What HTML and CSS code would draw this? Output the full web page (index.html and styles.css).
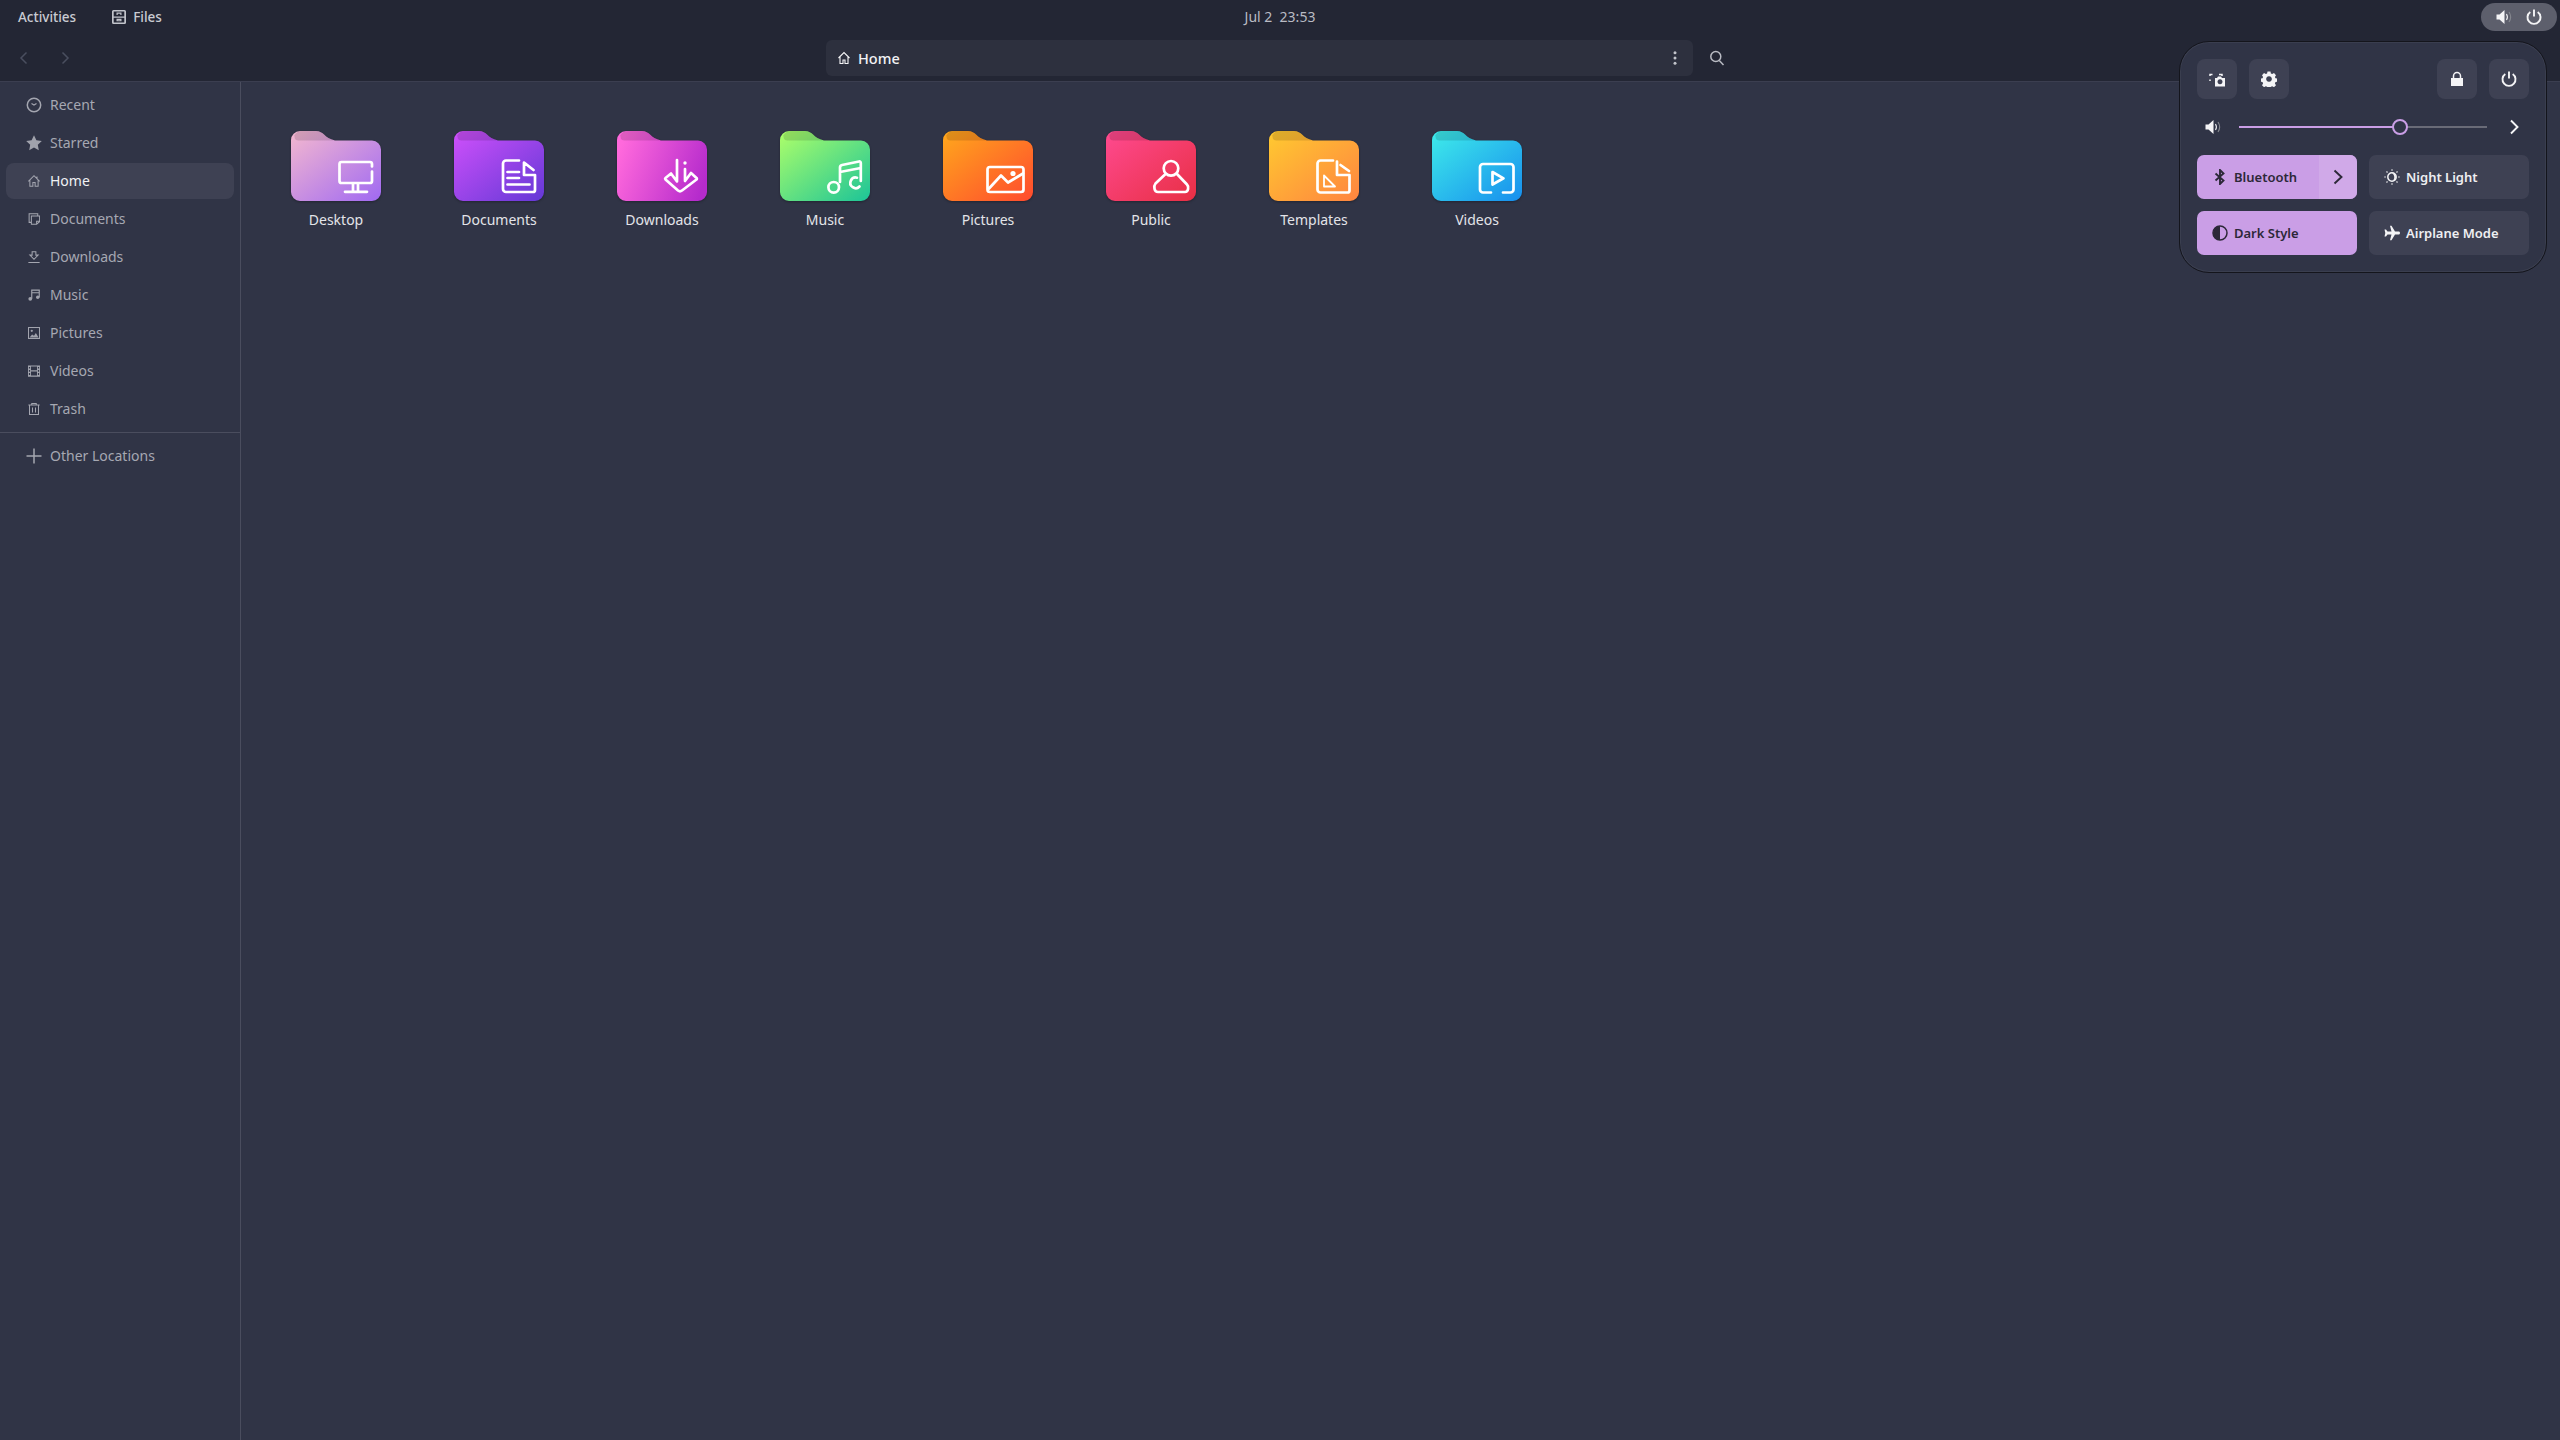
FILE: index.html
```html
<!DOCTYPE html>
<html lang="en">
<head>
<meta charset="utf-8">
<title>Files</title>
<link rel="stylesheet" href="styles.css">
</head>
<body>
<svg class="defs" width="0" height="0" aria-hidden="true">
  <defs>
    <linearGradient id="g-desktop" x1="0" y1="0" x2="1" y2="1"><stop offset="0" stop-color="#f4b8cf"/><stop offset="1" stop-color="#a069f2"/></linearGradient>
    <linearGradient id="g-documents" x1="0" y1="0" x2="1" y2="1"><stop offset="0" stop-color="#cf50fb"/><stop offset="1" stop-color="#6439d6"/></linearGradient>
    <linearGradient id="g-downloads" x1="0" y1=".35" x2="1" y2=".65"><stop offset="0" stop-color="#ff69dc"/><stop offset="1" stop-color="#b52bcc"/></linearGradient>
    <linearGradient id="g-music" x1="0" y1="0" x2="1" y2="1"><stop offset="0" stop-color="#aeff69"/><stop offset="1" stop-color="#1cc498"/></linearGradient>
    <linearGradient id="g-pictures" x1="0" y1="0" x2="1" y2="1"><stop offset="0" stop-color="#ffa81c"/><stop offset="1" stop-color="#ff4a2e"/></linearGradient>
    <linearGradient id="g-public" x1="0" y1="0" x2="1" y2="1"><stop offset="0" stop-color="#ff4a90"/><stop offset="1" stop-color="#e82f44"/></linearGradient>
    <linearGradient id="g-templates" x1="0" y1="0" x2="1" y2="1"><stop offset="0" stop-color="#ffca30"/><stop offset="1" stop-color="#ff8440"/></linearGradient>
    <linearGradient id="g-videos" x1="0" y1="0" x2="1" y2="1"><stop offset="0" stop-color="#3eecea"/><stop offset="1" stop-color="#178eee"/></linearGradient>
    <path id="folder-body" d="M9 0H25C33 0 33 7 44 9.500H81a9 9 0 0 1 9 9V61a9 9 0 0 1-9 9H9a9 9 0 0 1-9-9V9a9 9 0 0 1 9-9z"/>
    <path id="folder-tab" d="M9 0H25C33 0 33 7 44 9.500H7.500A4 4 0 0 1 3.500 5.500C3.500 5 3.200 5 3 5A9 9 0 0 1 9 0z"/>
  </defs>
</svg>

<div class="desktop">
  <header class="chrome">
    <div class="shellbar">
      <div class="shell-left">
        <span class="shell-text shell-activities">Activities</span>
        <span class="app-menu">
          <svg class="i16" viewBox="0 0 16 16"><path class="fill-light" fill-rule="evenodd" d="M2.500 1h11A1.500 1.500 0 0 1 15 2.500v11a1.500 1.500 0 0 1-1.500 1.500h-11A1.500 1.500 0 0 1 1 13.500v-11A1.500 1.500 0 0 1 2.500 1zm.2 1.500v5h10.600v-5zm0 6.200v4.800h10.600V8.700zM5.500 3.600h5V6h-1.200V4.800H6.700V6H5.500zm0 6.200h5v2.400h-5zm1.200 1.100v.4h2.600v-.4z"/></svg>
          <span class="shell-text">Files</span>
        </span>
      </div>
      <div class="shell-clock">Jul 2&nbsp;&nbsp;23:53</div>
      <div class="shell-right"></div>
    </div>
    <div class="headerbar">
      <div class="nav-buttons">
        <svg class="i16" viewBox="0 0 16 16"><path class="stroke-off" d="M10.500 2.500 5 8l5.500 5.500"/></svg>
        <svg class="i16" viewBox="0 0 16 16"><path class="stroke-off" d="M5.500 2.500 11 8l-5.500 5.500"/></svg>
      </div>
      <div class="pathbar">
        <div class="crumb">
          <svg class="i14" viewBox="0 0 14 14"><path class="stroke-white thin" d="M1.500 7 7 1.500 12.500 7M3 6v6.500h3V9h2v3.500h3V6"/></svg>
          <span>Home</span>
        </div>
        <svg class="i16" viewBox="0 0 16 16"><circle class="fill-light" cx="8" cy="2.800" r="1.500"/><circle class="fill-light" cx="8" cy="8" r="1.500"/><circle class="fill-light" cx="8" cy="13.200" r="1.500"/></svg>
      </div>
      <svg class="i16 search" viewBox="0 0 16 16"><circle class="stroke-light" cx="6.800" cy="6.500" r="5"/><path class="stroke-light" d="m10.300 10.500 4.200 4.500"/></svg>
    </div>
  </header>

  <main class="main">
    <nav class="sidebar">
      <ul class="places">
        <li class="place"><svg class="i16" viewBox="0 0 16 16"><circle class="stroke-dim" cx="8" cy="8" r="6.700"/><path class="stroke-dim thin" d="M5.500 6.500 8 8l2.500-1.500"/></svg><span>Recent</span></li>
        <li class="place"><svg class="i16 star" viewBox="0 0 16 16"><path class="fill-dim" d="m8 .3 2.400 5 5.400.7-4 3.800 1 5.400L8 12.600l-4.800 2.600 1-5.400-4-3.800 5.400-.7z"/></svg><span>Starred</span></li>
        <li class="place selected"><svg class="i12" viewBox="0 0 16 16"><path class="stroke-dim thin" d="M.5 8.500 8 1l7.500 7.500M2.500 7v8h4v-5h3v5h4V7M12 4.500V2"/></svg><span>Home</span></li>
        <li class="place"><svg class="i12" viewBox="0 0 16 16"><path class="stroke-dim thin" d="M4 12.500H1.500V1H13v2.500M4.500 4h11v7.500L11.500 15h-7zM15.500 11h-4v4"/></svg><span>Documents</span></li>
        <li class="place"><svg class="i12" viewBox="0 0 16 16"><path class="stroke-dim thin" d="M5.500 1h5v4.500h3L8 11 2.500 5.500h3zM.5 15.200h15"/></svg><span>Downloads</span></li>
        <li class="place"><svg class="i12" viewBox="0 0 16 16"><path class="stroke-dim" d="M5 13V1.500h10V11M5 5h10"/><circle class="fill-dim" cx="3" cy="13" r="2.500"/><circle class="fill-dim" cx="13" cy="11" r="2.300"/></svg><span>Music</span></li>
        <li class="place"><svg class="i12" viewBox="0 0 16 16"><rect class="stroke-dim thin" x=".7" y=".7" width="14.600" height="14.600"/><circle class="fill-dim" cx="5" cy="5" r="1.500"/><path class="fill-dim" d="m2 14 3.500-4 2.500 1.500L10.500 8l3.500 6z"/></svg><span>Pictures</span></li>
        <li class="place"><svg class="i12" viewBox="0 0 16 16"><path class="fill-dim" fill-rule="evenodd" d="M0 .5h16v15H0zm4 1.500v5h8V2zm0 6.500V14h8V8.500zM1.200 2.500v2.200h1.600V2.500zm0 4v2.500h1.600V6.500zm0 4.300v2.500h1.600v-2.500zm12-8.300v2.200h1.600V2.500zm0 4v2.500h1.600V6.500zm0 4.300v2.500h1.600v-2.500z"/></svg><span>Videos</span></li>
        <li class="place"><svg class="i12" viewBox="0 0 16 16"><path class="stroke-dim thin" d="M.5 2.800h15M5 2.800V.7h6v2.100M2 2.800v12.500h12V2.800M6 6v6.500M10 6v6.500"/></svg><span>Trash</span></li>
      </ul>
      <div class="side-sep"></div>
      <div class="place other"><svg class="i16" viewBox="0 0 16 16"><path class="stroke-dim" d="M8 .5v15M.5 8h15"/></svg><span>Other Locations</span></div>
    </nav>

    <section class="files">
      <figure class="folder">
        <svg class="folder-icon" viewBox="0 0 90 70"><use href="#folder-body" fill="url(#g-desktop)"/><use class="tab" href="#folder-tab"/><path class="glyph" d="M81 35.500V33a2 2 0 0 0-2-2H50.500a2 2 0 0 0-2 2v17a2 2 0 0 0 2 2H79a2 2 0 0 0 2-2v-9.500M62 52v8.500M67 52v8.500M54 60.800h22"/></svg>
        <figcaption>Desktop</figcaption>
      </figure>
      <figure class="folder">
        <svg class="folder-icon" viewBox="0 0 90 70"><use href="#folder-body" fill="url(#g-documents)"/><use class="tab" href="#folder-tab"/><path class="glyph" d="M65 29.500H52a3 3 0 0 0-3 3v25.500a3 3 0 0 0 3 3h27a2 2 0 0 0 2-2V44H70V31.500L79.500 39M53.500 41H65M53.500 47H65M53.500 53.500H75.500"/></svg>
        <figcaption>Documents</figcaption>
      </figure>
      <figure class="folder">
        <svg class="folder-icon" viewBox="0 0 90 70"><use href="#folder-body" fill="url(#g-downloads)"/><use class="tab" href="#folder-tab"/><path class="glyph" d="M60 29v21.500L54 42.500 48.500 47c-.5.500-.5 1 0 1.500L61 59.500c1.500 1.200 2.500 1.200 4 0L79.500 48.500c.5-.5.5-1 0-1.500L74 42l-6 8V38"/><circle class="dot" cx="68" cy="32" r="1.700"/></svg>
        <figcaption>Downloads</figcaption>
      </figure>
      <figure class="folder">
        <svg class="folder-icon" viewBox="0 0 90 70"><use href="#folder-body" fill="url(#g-music)"/><use class="tab" href="#folder-tab"/><path class="glyph" d="M60 51V36.500a2.500 2.500 0 0 1 2-2.500l17-3.500a1.500 1.500 0 0 1 1.800 1.500V50M60 41l20.800-4"/><circle class="glyph" cx="53.700" cy="56.300" r="5.300"/><path class="glyph" d="M79.500 55.500a5.300 5.300 0 1 1-2.500-8.800"/></svg>
        <figcaption>Music</figcaption>
      </figure>
      <figure class="folder">
        <svg class="folder-icon" viewBox="0 0 90 70"><use href="#folder-body" fill="url(#g-pictures)"/><use class="tab" href="#folder-tab"/><rect class="glyph" x="44.500" y="36" width="36" height="25" rx="2.500"/><path class="glyph" d="m46 57.500 12-13 7 7 15-9"/><circle class="dot" cx="70" cy="42.500" r="2.600"/></svg>
        <figcaption>Pictures</figcaption>
      </figure>
      <figure class="folder">
        <svg class="folder-icon" viewBox="0 0 90 70"><use href="#folder-body" fill="url(#g-public)"/><use class="tab" href="#folder-tab"/><circle class="glyph" cx="65" cy="37.300" r="7.300"/><path class="glyph" d="M59 43.500 49.500 52.500c-2 2.500-1.500 8.500 2.500 8.500h27c3.500 0 4-5.500 2-7.500L71 43"/></svg>
        <figcaption>Public</figcaption>
      </figure>
      <figure class="folder">
        <svg class="folder-icon" viewBox="0 0 90 70"><use href="#folder-body" fill="url(#g-templates)"/><use class="tab" href="#folder-tab"/><path class="glyph" d="M64 29.500H51.500a3 3 0 0 0-3 3v26a3 3 0 0 0 3 3h27a2 2 0 0 0 2-2V44H68V30.500M71.500 34 80 40"/><path class="glyph thin-glyph" d="M55 44.500v11h11z"/></svg>
        <figcaption>Templates</figcaption>
      </figure>
      <figure class="folder">
        <svg class="folder-icon" viewBox="0 0 90 70"><use href="#folder-body" fill="url(#g-videos)"/><use class="tab" href="#folder-tab"/><path class="glyph" d="M59 61.500h-8a3 3 0 0 1-3-3V36a3 3 0 0 1 3-3h27.500a3 3 0 0 1 3 3v22.500a3 3 0 0 1-3 3H71"/><path class="glyph" d="M60.500 41 71.500 47.300 60.500 53.500z"/></svg>
        <figcaption>Videos</figcaption>
      </figure>
    </section>
  </main>
</div>

<div class="status-pill">
  <svg class="i16" viewBox="0 0 16 16"><path class="fill-white" d="M.5 5.500h3L8.500 1v14l-5-4.500h-3z"/><path class="stroke-white thin" d="M10.500 5c1.200 2 1.200 4 0 6"/><path class="stroke-grey thin" d="M13 3c2 3 2 7 0 10"/></svg>
  <svg class="i16" viewBox="0 0 16 16"><path class="stroke-white thick" d="M8 .5v7M4.300 3a6.500 6.500 0 1 0 7.400 0"/></svg>
</div>

<aside class="quick">
  <div class="quick-row top-row">
    <div class="quick-group">
      <div class="round-btn"><svg class="i16" viewBox="0 0 16 16"><path class="stroke-white" d="M1 5V3.500h2.500M1 8.500v1.500M10 3.500h3V5"/><path class="fill-white" fill-rule="evenodd" d="M6 7h2l1-1.500h3L13 7h3v8.500H6zM11 8.300a2.500 2.500 0 1 0 .01 0z"/></svg></div>
      <div class="round-btn"><svg class="i16" viewBox="0 0 16 16"><path class="fill-white" fill-rule="evenodd" d="M6.500.5h3l.4 2 1.300.6 1.800-1 2 2.100-1.100 1.700.6 1.400 2 .4v3l-2 .4-.6 1.400 1.100 1.700-2 2-1.800-1-1.300.6-.4 2h-3l-.4-2-1.300-.6-1.800 1-2-2 1.100-1.700-.6-1.400-2-.4v-3l2-.4.6-1.400-1.100-1.700 2-2.100 1.800 1 1.300-.6zM8 5.200a2.800 2.800 0 1 0 .01 0z"/></svg></div>
    </div>
    <div class="quick-group">
      <div class="round-btn"><svg class="i16" viewBox="0 0 16 16"><path class="fill-white" d="M2 7h12v8H2z"/><path class="stroke-white" d="M4.500 7.500V5a3.500 3.500 0 0 1 7 0v2.500"/></svg></div>
      <div class="round-btn"><svg class="i16" viewBox="0 0 16 16"><path class="stroke-white thick" d="M8 .5v7M4.300 3a6.500 6.500 0 1 0 7.400 0"/></svg></div>
    </div>
  </div>
  <div class="slider-row">
    <svg class="i16" viewBox="0 0 16 16"><path class="fill-white" d="M.5 5.500h3L8.500 1v14l-5-4.500h-3z"/><path class="stroke-white thin" d="M10.500 5c1.200 2 1.200 4 0 6"/><path class="stroke-grey thin" d="M13 3c2 3 2 7 0 10"/></svg>
    <div class="slider"><div class="slider-fill"></div><div class="slider-knob"></div></div>
    <svg class="i16 slider-next" viewBox="0 0 16 16"><path class="stroke-white thick" d="m5 1.500 6.500 6.500L5 14.500"/></svg>
  </div>
  <div class="toggles">
    <div class="toggle on split">
      <div class="toggle-main">
        <svg class="i16" viewBox="0 0 16 16"><path class="stroke-dark thick" d="m3.500 4.500 8 7L8 15V1l3.500 3.500-8 7"/></svg>
        <span>Bluetooth</span>
      </div>
      <div class="toggle-arrow"><svg class="i16" viewBox="0 0 16 16"><path class="stroke-dark thick" d="m4.500 1.500 7 6.500-7 6.500"/></svg></div>
    </div>
    <div class="toggle">
      <svg class="i16" viewBox="0 0 16 16"><circle class="stroke-white" cx="8" cy="8" r="4.200"/><path class="fill-white" d="M8 4a4 4 0 0 1 0 8c3-1 3-6 0-8z"/><path class="stroke-white thin" d="M8 .3v1.500M8 14.200v1.500M.3 8h1.500M14.200 8h1.500M2.500 2.500l1 1M12.500 12.500l1 1M2.500 13.500l1-1M12.500 3.500l1-1"/></svg>
      <span>Night Light</span>
    </div>
    <div class="toggle on">
      <svg class="i16" viewBox="0 0 16 16"><circle class="stroke-dark" cx="8" cy="8" r="7"/><path class="fill-dark" d="M8 1a7 7 0 0 0 0 14z"/></svg>
      <span>Dark Style</span>
    </div>
    <div class="toggle">
      <svg class="i16" viewBox="0 0 16 16"><path class="fill-white" d="M6 .8h1.500L11 6.500h3.500c1 0 1.500.7 1.500 1.500s-.5 1.500-1.500 1.500H11L7.500 15.200H6l1.500-5.700H3.500L2 11.500H.5L1.300 8 .5 4.500H2l1.500 2h4z"/></svg>
      <span>Airplane Mode</span>
    </div>
  </div>
</aside>
</body>
</html>
```

FILE: styles.css
```css
* { box-sizing: border-box; }
html, body { margin: 0; height: 100%; }
body {
  background: #303446;
  color: #d8dae2;
  font-family: "Noto Sans", "Liberation Sans", sans-serif;
  font-size: 14px;
  overflow: hidden;
}
.defs { position: absolute; }
svg { display: block; flex: none; }
.i16 { width: 16px; height: 16px; }
.i14 { width: 14px; height: 14px; }
.i12 { width: 12px; height: 12px; margin: 0 2px; }

.stroke-off, .stroke-white, .stroke-light, .stroke-dim, .stroke-grey, .stroke-dark { fill: none; stroke-width: 1.5; }
.thin { stroke-width: 1.1; }
.thick { stroke-width: 1.9; }
.i12 .thin { stroke-width: 1.35; }
.stroke-off { stroke: #4a4e5f; }
.stroke-white { stroke: #f4f4f6; }
.stroke-light { stroke: #b9bbc3; }
.stroke-dim { stroke: #a4a6b0; }
.stroke-grey { stroke: #85878f; }
.stroke-dark { stroke: #2c2838; }
.fill-white { fill: #f4f4f6; }
.fill-light { fill: #c2c4cb; }
.fill-dim { fill: #a0a2ac; }
.fill-dark { fill: #2c2838; }

.desktop { display: flex; flex-direction: column; height: 1440px; }
.chrome { background: #232634; border-bottom: 1px solid #3b3e50; height: 82px; flex: none; }
.shellbar { height: 34px; display: grid; grid-template-columns: 1fr auto 1fr; align-items: center; padding: 0 18px; }
.shell-left { display: flex; align-items: center; gap: 35px; }
.shell-text { font-size: 13.5px; font-weight: 500; color: #c9cbd2; }
.app-menu { display: flex; align-items: center; gap: 6px; }
.shell-clock { font-size: 14px; color: #b9bbc3; margin-top: -1px; }

.headerbar { height: 47px; display: flex; align-items: center; padding-left: 16px; }
.nav-buttons { display: flex; gap: 25px; width: 810px; }
.pathbar { width: 867px; height: 36px; background: #2d303e; border-radius: 6px; display: flex; align-items: center; justify-content: space-between; padding: 0 10px 0 11px; }
.crumb { display: flex; align-items: center; gap: 7px; font-size: 14.5px; font-weight: 500; color: #f2f2f4; }
.search { margin-left: 16px; }

.main { flex: 1; display: flex; min-height: 0; }
.sidebar { width: 241px; flex: none; border-right: 1px solid #4a4d5e; padding-top: 5px; }
.places { list-style: none; margin: 0; padding: 0 6px; display: flex; flex-direction: column; gap: 2px; }
.place { height: 36px; display: flex; align-items: center; gap: 8px; padding-left: 20px; font-size: 14px; color: #a6a8b2; border-radius: 8px; }
.place span { margin-top: -1px; }
.place.selected { background: #3e4153; color: #f0f1f4; }
.side-sep { height: 1px; background: #4a4d5e; margin-top: 5px; }
.other { margin: 5px 6px 0; }

.files { flex: 1; display: flex; align-items: flex-start; padding: 49px 0 0 13.5px; }
.folder { width: 163px; margin: 0; display: flex; flex-direction: column; align-items: center; }
.folder-icon { width: 90px; height: 70px; filter: drop-shadow(0 1px 1px rgba(0,0,0,.3)); overflow: visible; }
.folder figcaption { margin-top: 9px; font-size: 14px; color: #e3e4e9; line-height: 19px; }
.tab { fill: rgba(0,0,0,.13); }
.glyph { fill: none; stroke: #fff; stroke-width: 2.7; stroke-linecap: round; stroke-linejoin: round; }
.thin-glyph { stroke-width: 1.8; }
.dot { fill: #fff; }

.status-pill { position: absolute; left: 2481px; top: 3px; width: 76px; height: 28px; border-radius: 14px; background: #5d5f6c; display: flex; align-items: center; justify-content: center; gap: 14px; }

.quick { position: absolute; left: 2179px; top: 41px; width: 368px; height: 232px; border-radius: 30px; background: #303446; border: 1px solid #14151c; box-shadow: 0 0 0 1px rgba(255,255,255,.05) inset; padding: 17px 17px 0; }
.quick-row { display: flex; justify-content: space-between; }
.quick-group { display: flex; gap: 12px; }
.round-btn { width: 40px; height: 40px; border-radius: 8px; background: #3e4153; display: flex; align-items: center; justify-content: center; }
.slider-row { display: flex; align-items: center; height: 28px; margin-top: 14px; padding-left: 8px; }
.slider { position: relative; width: 248px; height: 2px; margin-left: 18px; background: #696b77; }
.slider-fill { width: 160px; height: 2px; background: #ca9ee6; }
.slider-knob { position: absolute; left: 153px; top: -7px; width: 16px; height: 16px; border-radius: 50%; background: #303446; border: 2px solid #ca9ee6; }
.slider-next { margin-left: 19px; }
.toggles { display: grid; grid-template-columns: 160px 160px; gap: 12px; margin-top: 14px; }
.toggle { height: 44px; border-radius: 7px; background: #3e4153; display: flex; align-items: center; gap: 6px; padding-left: 15px; font-size: 13px; font-weight: 600; color: #eeeff2; }
.toggle.on { background: #ca9ee6; color: #2c2838; }
.toggle.split { padding-left: 0; gap: 0; }
.toggle-main { flex: 1; display: flex; align-items: center; gap: 6px; padding-left: 15px; height: 100%; }
.toggle-arrow { width: 38px; height: 100%; display: flex; align-items: center; justify-content: center; background: #d0a9e8; border-radius: 0 7px 7px 0; }
```
